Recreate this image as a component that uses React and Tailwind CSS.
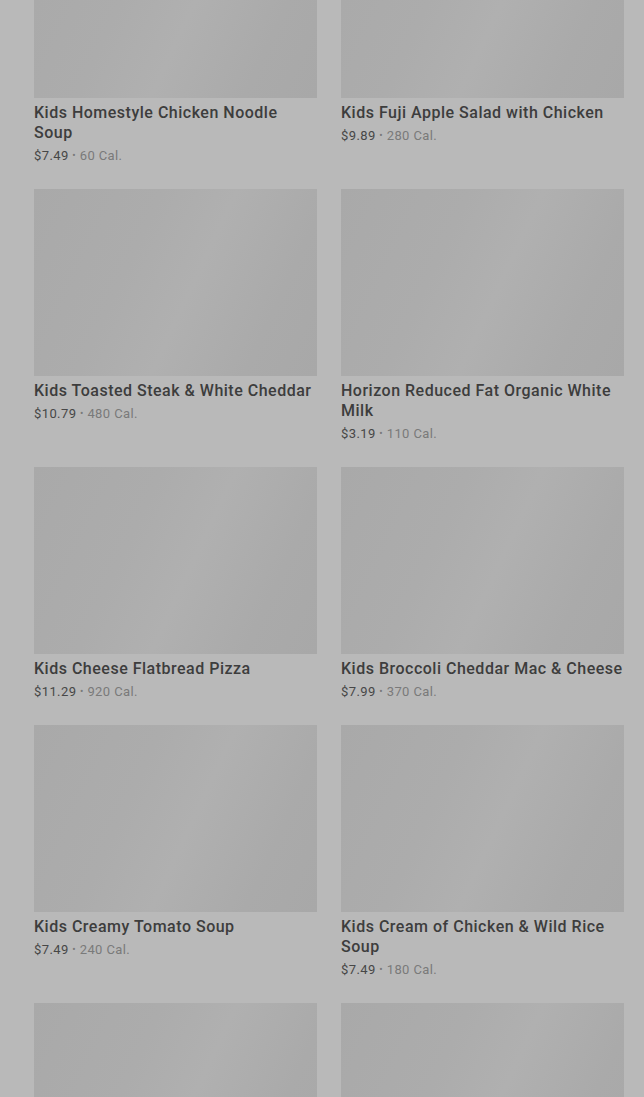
import React from "react";

const items = [
  { name: "Kids Homestyle Chicken Noodle Soup", price: "$7.49", cal: "60 Cal." },
  { name: "Kids Fuji Apple Salad with Chicken", price: "$9.89", cal: "280 Cal." },
  { name: "Kids Toasted Steak & White Cheddar", price: "$10.79", cal: "480 Cal." },
  { name: "Horizon Reduced Fat Organic White Milk", price: "$3.19", cal: "110 Cal." },
  { name: "Kids Cheese Flatbread Pizza", price: "$11.29", cal: "920 Cal." },
  { name: "Kids Broccoli Cheddar Mac & Cheese", price: "$7.99", cal: "370 Cal." },
  { name: "Kids Creamy Tomato Soup", price: "$7.49", cal: "240 Cal." },
  { name: "Kids Cream of Chicken & Wild Rice Soup", price: "$7.49", cal: "180 Cal." },
  { name: null },
  { name: null },
];

function Card({ item }) {
  return (
    <div className="flex flex-col">
      <div className="h-[187px] w-full bg-[linear-gradient(115deg,#a9a9a9_0%,#acacac_35%,#b0b0b0_55%,#aaaaaa_80%,#a8a8a8_100%)]" />
      {item.name && (
        <>
          <div className="mt-[5px] text-[16px] leading-5 font-medium tracking-[0.5px] text-[#3d3d3d]">
            {item.name}
          </div>
          <div className="mt-[3px] text-[13px] leading-5 tracking-[0.4px] text-[#474747]">
            {item.price}
            <span className="text-[#7a7a7a]">
              {" "}
              <span className="text-[10px] align-[1px]">•</span> {item.cal}
            </span>
          </div>
        </>
      )}
    </div>
  );
}

export default function App() {
  return (
    <div
      className="h-[1097px] w-[644px] overflow-hidden bg-[#b9b9b9]"
      style={{ fontFamily: "Roboto, 'Noto Sans', sans-serif" }}
    >
      <div className="-mt-[89px] grid grid-cols-2 gap-x-6 gap-y-[23px] pl-[34px] pr-[20px]">
        {items.map((it, i) => (
          <Card key={i} item={it} />
        ))}
      </div>
    </div>
  );
}
